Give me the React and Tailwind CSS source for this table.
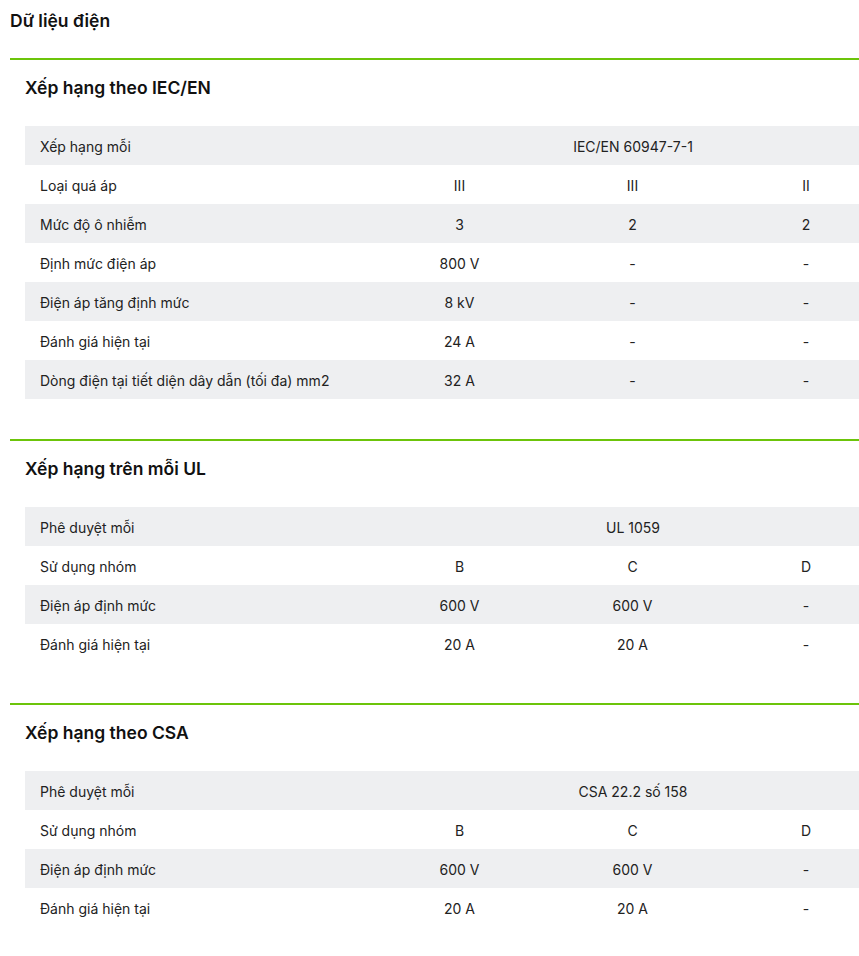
const sections = [
  {
    title: "Xếp hạng theo IEC/EN",
    head: ["Xếp hạng mỗi", "IEC/EN 60947-7-1"],
    rows: [
      ["Loại quá áp", "III", "III", "II"],
      ["Mức độ ô nhiễm", "3", "2", "2"],
      ["Định mức điện áp", "800 V", "-", "-"],
      ["Điện áp tăng định mức", "8 kV", "-", "-"],
      ["Đánh giá hiện tại", "24 A", "-", "-"],
      ["Dòng điện tại tiết diện dây dẫn (tối đa) mm2", "32 A", "-", "-"],
    ],
  },
  {
    title: "Xếp hạng trên mỗi UL",
    head: ["Phê duyệt mỗi", "UL 1059"],
    rows: [
      ["Sử dụng nhóm", "B", "C", "D"],
      ["Điện áp định mức", "600 V", "600 V", "-"],
      ["Đánh giá hiện tại", "20 A", "20 A", "-"],
    ],
  },
  {
    title: "Xếp hạng theo CSA",
    head: ["Phê duyệt mỗi", "CSA 22.2 số 158"],
    rows: [
      ["Sử dụng nhóm", "B", "C", "D"],
      ["Điện áp định mức", "600 V", "600 V", "-"],
      ["Đánh giá hiện tại", "20 A", "20 A", "-"],
    ],
  },
];

function RatingTable({ head, rows }) {
  return (
    <table className="table-fixed w-[868px] ml-[15px] border-collapse text-[14px] text-[#222]">
      <colgroup>
        <col className="w-[348px]" />
        <col className="w-[173px]" />
        <col className="w-[173px]" />
        <col className="w-[174px]" />
      </colgroup>
      <tbody>
        <tr className="h-[39px] bg-[#eeeff1]">
          <td className="pl-[15px] pt-[2px]">{head[0]}</td>
          <td colSpan={3} className="text-center pt-[2px]">
            {head[1]}
          </td>
        </tr>
        {rows.map((row, i) => (
          <tr key={row[0]} className={`h-[39px] ${i % 2 === 1 ? "bg-[#eeeff1]" : "bg-white"}`}>
            <td className="pl-[15px] pt-[2px] whitespace-nowrap">{row[0]}</td>
            <td className="text-center pt-[2px]">{row[1]}</td>
            <td className="text-center pt-[2px]">{row[2]}</td>
            <td className="text-center pt-[2px]">{row[3]}</td>
          </tr>
        ))}
      </tbody>
    </table>
  );
}

export default function App() {
  return (
    <div className="w-[859px] min-h-[956px] overflow-hidden bg-white font-['Inter',sans-serif] text-[#111]">
      <div className="pl-[10px]">
        <h2 className="h-[40px] pt-[9px] text-[17.5px] leading-[24px] font-semibold">Dữ liệu điện</h2>
        <div className="h-[18px]" />
        {sections.map((s) => (
          <section key={s.title} className="pb-[40px]">
            <div className="h-[2px] bg-[#6cc40a]" />
            <h3 className="pl-[15px] pt-[15px] pb-[25px] text-[17.5px] leading-[26px] font-semibold">
              {s.title}
            </h3>
            <RatingTable head={s.head} rows={s.rows} />
          </section>
        ))}
      </div>
    </div>
  );
}
